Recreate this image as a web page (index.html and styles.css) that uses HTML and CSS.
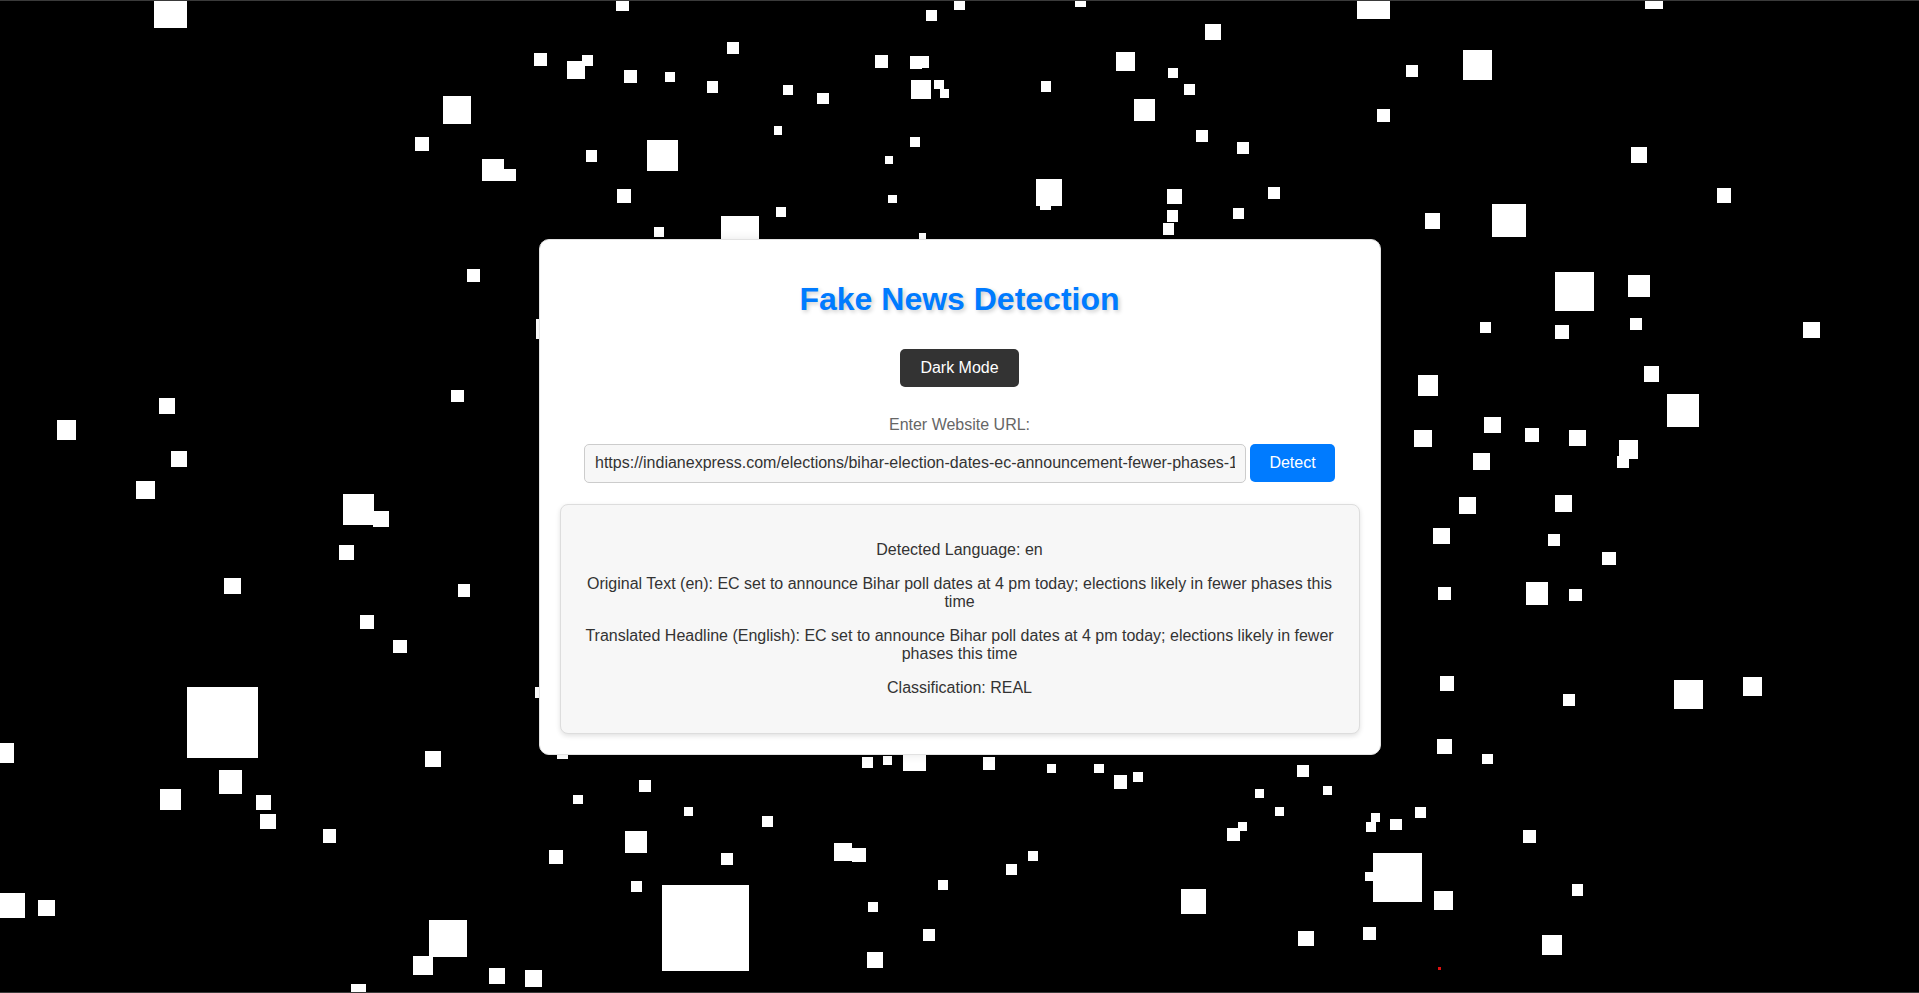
FILE: index.html
```html
<!DOCTYPE html>
<html lang="en">
<head>
<meta charset="utf-8">
<title>Fake News Detection</title>
<link rel="stylesheet" href="styles.css">
</head>
<body>
<div class="stage">
  <svg class="particles" width="1919" height="993" viewBox="0 0 1919 993" aria-hidden="true">
    <g fill="#fff">
      <rect x="154" y="-5" width="33" height="33"/><rect x="534" y="53" width="13" height="13"/><rect x="443" y="96" width="28" height="28"/><rect x="415" y="137" width="14" height="14"/><rect x="482" y="159" width="22" height="22"/><rect x="504" y="169" width="12" height="12"/><rect x="467" y="269" width="13" height="13"/><rect x="536" y="319" width="20" height="20"/><rect x="451" y="390" width="13" height="12"/><rect x="159" y="398" width="16" height="16"/><rect x="57" y="420" width="19" height="20"/><rect x="171" y="451" width="16" height="16"/><rect x="136" y="481" width="19" height="18"/><rect x="343" y="494" width="31" height="31"/><rect x="373" y="511" width="16" height="16"/><rect x="339" y="545" width="15" height="15"/><rect x="224" y="578" width="17" height="16"/><rect x="458" y="584" width="12" height="13"/><rect x="360" y="615" width="14" height="14"/><rect x="393" y="640" width="14" height="13"/><rect x="187" y="687" width="71" height="71"/><rect x="535" y="687" width="11" height="11"/><rect x="-6" y="743" width="20" height="20"/><rect x="425" y="751" width="16" height="16"/><rect x="219" y="770" width="23" height="24"/><rect x="160" y="789" width="21" height="21"/><rect x="256" y="795" width="15" height="15"/><rect x="260" y="814" width="16" height="15"/><rect x="323" y="829" width="13" height="14"/><rect x="0" y="893" width="25" height="25"/><rect x="38" y="900" width="17" height="16"/><rect x="429" y="920" width="38" height="37"/><rect x="413" y="956" width="20" height="19"/><rect x="489" y="968" width="16" height="16"/><rect x="525" y="970" width="17" height="17"/><rect x="351" y="984" width="15" height="15"/>
      <rect x="616" y="-2" width="13" height="13"/><rect x="954" y="-1" width="11" height="11"/><rect x="1075" y="-4" width="11" height="11"/><rect x="926" y="10" width="11" height="11"/><rect x="1205" y="24" width="16" height="16"/><rect x="727" y="42" width="12" height="12"/><rect x="582" y="55" width="11" height="11"/><rect x="567" y="61" width="18" height="18"/><rect x="624" y="70" width="13" height="13"/><rect x="665" y="72" width="10" height="10"/><rect x="707" y="81" width="11" height="12"/><rect x="783" y="85" width="10" height="10"/><rect x="817" y="93" width="12" height="11"/><rect x="875" y="55" width="13" height="13"/><rect x="910" y="56" width="12" height="13"/><rect x="917" y="56" width="12" height="12"/><rect x="911" y="80" width="20" height="19"/><rect x="934" y="80" width="10" height="9"/><rect x="940" y="89" width="9" height="9"/><rect x="1041" y="81" width="10" height="11"/><rect x="1116" y="52" width="19" height="19"/><rect x="1168" y="68" width="10" height="10"/><rect x="1184" y="84" width="11" height="11"/><rect x="1134" y="99" width="21" height="22"/><rect x="774" y="126" width="8" height="9"/><rect x="910" y="137" width="10" height="10"/><rect x="885" y="156" width="8" height="8"/><rect x="1196" y="130" width="12" height="12"/><rect x="1237" y="142" width="12" height="12"/><rect x="586" y="150" width="11" height="12"/><rect x="647" y="140" width="31" height="31"/><rect x="617" y="189" width="14" height="14"/><rect x="776" y="207" width="10" height="10"/><rect x="888" y="195" width="9" height="8"/><rect x="1036" y="179" width="26" height="27"/><rect x="1040" y="200" width="11" height="10"/><rect x="1167" y="189" width="15" height="15"/><rect x="1268" y="187" width="12" height="12"/><rect x="1167" y="210" width="11" height="12"/><rect x="1233" y="208" width="11" height="11"/><rect x="1163" y="223" width="11" height="12"/><rect x="654" y="227" width="10" height="10"/><rect x="721" y="216" width="38" height="38"/><rect x="919" y="233" width="7" height="7"/>
      <rect x="1357" y="-14" width="33" height="33"/><rect x="1645" y="-9" width="18" height="18"/><rect x="1406" y="65" width="12" height="12"/><rect x="1463" y="50" width="29" height="30"/><rect x="1377" y="109" width="13" height="13"/><rect x="1631" y="147" width="16" height="16"/><rect x="1717" y="188" width="14" height="15"/><rect x="1425" y="213" width="15" height="16"/><rect x="1492" y="204" width="34" height="33"/><rect x="1555" y="272" width="39" height="39"/><rect x="1628" y="275" width="22" height="22"/><rect x="1480" y="322" width="11" height="11"/><rect x="1555" y="325" width="14" height="14"/><rect x="1630" y="318" width="12" height="12"/><rect x="1803" y="322" width="17" height="16"/><rect x="1418" y="375" width="20" height="21"/><rect x="1644" y="366" width="15" height="16"/><rect x="1667" y="394" width="32" height="33"/><rect x="1484" y="417" width="17" height="16"/><rect x="1414" y="430" width="18" height="17"/><rect x="1525" y="428" width="14" height="14"/><rect x="1569" y="430" width="17" height="16"/><rect x="1619" y="440" width="19" height="19"/><rect x="1617" y="456" width="12" height="12"/><rect x="1473" y="453" width="17" height="17"/><rect x="1459" y="497" width="17" height="17"/><rect x="1555" y="495" width="17" height="17"/>
      <rect x="1433" y="528" width="17" height="16"/><rect x="1548" y="534" width="12" height="12"/><rect x="1602" y="552" width="14" height="13"/><rect x="1438" y="587" width="13" height="13"/><rect x="1526" y="582" width="22" height="23"/><rect x="1569" y="589" width="13" height="12"/><rect x="1440" y="676" width="14" height="15"/><rect x="1563" y="694" width="12" height="12"/><rect x="1674" y="680" width="29" height="29"/><rect x="1743" y="677" width="19" height="19"/><rect x="1437" y="739" width="15" height="15"/><rect x="1482" y="754" width="11" height="10"/><rect x="1415" y="807" width="11" height="11"/><rect x="1390" y="819" width="12" height="11"/><rect x="1523" y="830" width="13" height="13"/><rect x="1373" y="853" width="49" height="49"/><rect x="1365" y="872" width="9" height="9"/><rect x="1434" y="891" width="19" height="19"/><rect x="1572" y="884" width="11" height="12"/><rect x="1542" y="935" width="20" height="20"/>
      <rect x="557" y="748" width="11" height="11"/><rect x="862" y="757" width="11" height="11"/><rect x="883" y="756" width="9" height="9"/><rect x="903" y="748" width="23" height="23"/><rect x="983" y="757" width="12" height="13"/><rect x="1047" y="764" width="9" height="9"/><rect x="1094" y="764" width="10" height="9"/><rect x="1114" y="775" width="13" height="14"/><rect x="1133" y="772" width="10" height="10"/><rect x="1297" y="765" width="12" height="12"/><rect x="1323" y="786" width="9" height="9"/><rect x="1255" y="789" width="9" height="9"/><rect x="1275" y="807" width="9" height="9"/><rect x="1227" y="828" width="13" height="13"/><rect x="1238" y="822" width="9" height="9"/><rect x="1371" y="813" width="9" height="9"/><rect x="1366" y="822" width="10" height="10"/><rect x="639" y="780" width="12" height="12"/><rect x="573" y="795" width="10" height="9"/><rect x="684" y="807" width="9" height="9"/><rect x="762" y="816" width="11" height="11"/><rect x="625" y="831" width="22" height="22"/><rect x="549" y="850" width="14" height="14"/><rect x="721" y="853" width="12" height="12"/><rect x="834" y="843" width="18" height="18"/><rect x="852" y="848" width="14" height="14"/><rect x="1028" y="851" width="10" height="10"/><rect x="1006" y="864" width="11" height="11"/><rect x="938" y="880" width="10" height="10"/><rect x="631" y="881" width="11" height="11"/><rect x="662" y="885" width="87" height="86"/><rect x="868" y="902" width="10" height="10"/><rect x="1181" y="889" width="25" height="25"/><rect x="923" y="929" width="12" height="12"/><rect x="867" y="952" width="16" height="16"/><rect x="1298" y="931" width="16" height="15"/><rect x="1363" y="927" width="13" height="13"/>
    </g>
    <rect x="1438" y="967" width="3" height="3" fill="#e01010"/>
  </svg>

  <main class="card">
    <h1 class="title">Fake News Detection</h1>
    <button class="mode-btn" type="button">Dark Mode</button>
    <label class="url-label" for="url">Enter Website URL:</label>
    <div class="url-row">
      <input id="url" class="url-input" type="text" value="https://indianexpress.com/elections/bihar-election-dates-ec-announcement-fewer-phases-10284456/">
      <button class="detect-btn" type="button">Detect</button>
    </div>
    <section class="result">
      <p>Detected Language: en</p>
      <p>Original Text (en): EC set to announce Bihar poll dates at 4 pm today; elections likely in fewer phases this time</p>
      <p>Translated Headline (English): EC set to announce Bihar poll dates at 4 pm today; elections likely in fewer phases this time</p>
      <p>Classification: REAL</p>
    </section>
  </main>
</div>
</body>
</html>
```

FILE: styles.css
```css
html, body {
  margin: 0;
  padding: 0;
  background: #000;
  font-family: "Liberation Sans", Arial, sans-serif;
  font-size: 16px;
  overflow: hidden;
}

.stage {
  position: relative;
  height: 100vh;
  display: flex;
  align-items: center;
  justify-content: center;
}

.stage::before,
.stage::after {
  content: "";
  position: absolute;
  left: 0;
  right: 0;
  height: 1px;
  background: #3a3a3a;
  z-index: 3;
}
.stage::before { top: 0; }
.stage::after { bottom: 0; }

.particles {
  position: absolute;
  top: 0;
  left: 0;
  z-index: 0;
}

.card {
  position: relative;
  z-index: 1;
  width: 800px;
  padding: 20px;
  background: #fff;
  border: 1px solid #e2e2e2;
  border-radius: 10px;
  box-shadow: 0 0 10px rgba(0, 0, 0, 0.1);
  text-align: center;
  display: flex;
  flex-direction: column;
  align-items: center;
}

.title {
  margin: 21px 0 0;
  font-size: 32px;
  font-weight: bold;
  line-height: normal;
  color: #007bff;
  text-shadow: 2px 2px 4px rgba(0, 0, 0, 0.2);
}

.mode-btn {
  margin-top: 31px;
  padding: 10px 20px;
  font-family: inherit;
  font-size: 16px;
  line-height: normal;
  color: #fff;
  background: #333;
  border: none;
  border-radius: 5px;
}

.url-label {
  display: block;
  margin-top: 29px;
  color: #666;
  line-height: normal;
}

.url-row {
  margin-top: 10px;
  display: flex;
  align-items: center;
  gap: 4px;
}

.url-input {
  box-sizing: border-box;
  width: 662px;
  height: 39px;
  padding: 0 10px;
  font-family: inherit;
  font-size: 16px;
  color: #333;
  background: #f7f7f7;
  border: 1px solid #ccc;
  border-radius: 5px;
  outline: none;
}

.detect-btn {
  box-sizing: border-box;
  width: 85px;
  height: 38px;
  padding: 0;
  font-family: inherit;
  font-size: 16px;
  color: #fff;
  background: #007bff;
  border: none;
  border-radius: 5px;
}

.result {
  box-sizing: border-box;
  align-self: stretch;
  margin-top: 21px;
  padding: 20px;
  background: #f7f7f7;
  border: 1px solid #ddd;
  border-radius: 8px;
  box-shadow: 0 2px 5px rgba(0, 0, 0, 0.12);
  color: #333;
  line-height: normal;
}

.result p {
  margin: 16px 0;
}
```
